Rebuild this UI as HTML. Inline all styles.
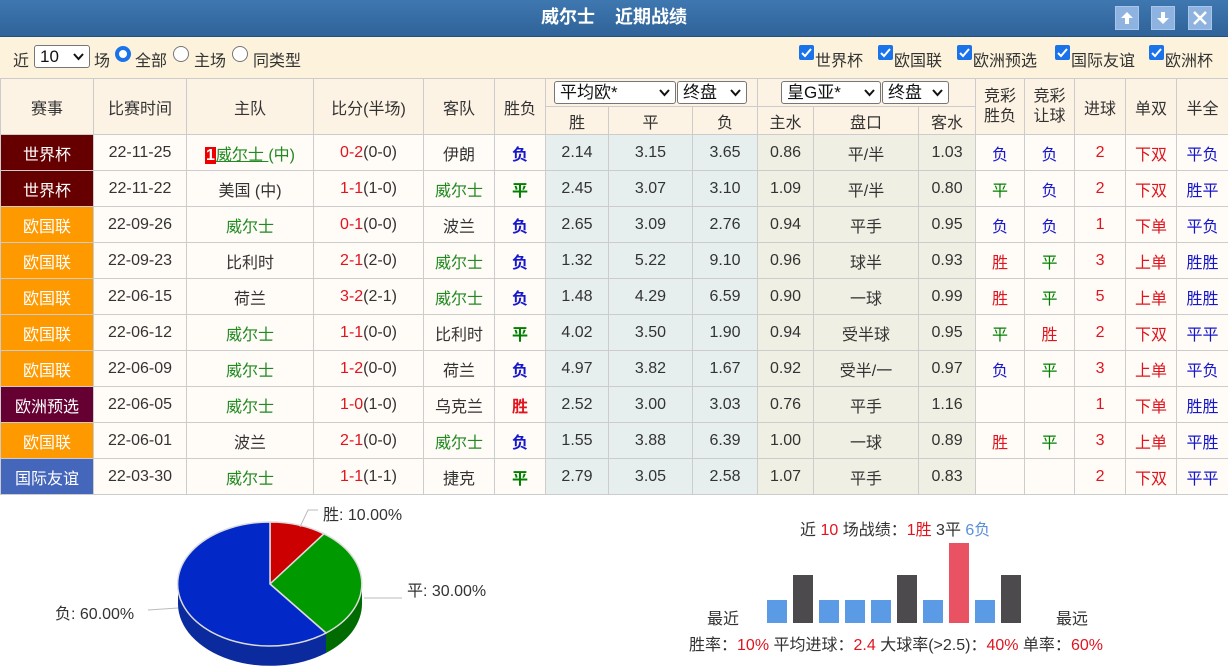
<!DOCTYPE html>
<html><head><meta charset="utf-8"><style>
*{margin:0;padding:0;box-sizing:border-box}
body{width:1228px;height:671px;overflow:hidden;background:#fff;font-family:"Liberation Sans","Noto Sans CJK SC",sans-serif;font-size:16px;color:#333;position:relative}
.title{position:absolute;left:0;top:0;width:1228px;height:37px;background:linear-gradient(#3f77b0,#2f6399);color:#fff;font-weight:bold;font-size:18px;text-align:center;line-height:35px;border-bottom:1px solid #24507e}
.btn{position:absolute;top:6px;width:24px;height:24px;background:#8fb3e0;border:1px solid #a9c6ea}
.filter{position:absolute;left:0;top:37px;width:1228px;height:41px;background:#fdf3dc}
.sel{position:absolute;background:#fff;border:1px solid #767676;border-radius:3px;height:23px;font-size:17px;line-height:21px;padding-left:5px;color:#111}
.sel svg{position:absolute;right:5px;top:7px}
.radio{position:absolute;width:16px;height:16px;border-radius:50%;border:1px solid #767676;background:#fff;top:46px}
.cb{position:absolute;top:45px;width:15px;height:15px;background:#1a73e8;border-radius:2px}
.cb svg{position:absolute;left:1px;top:1px}
table{position:absolute;left:0;top:78px;border-collapse:collapse;table-layout:fixed;width:1228px}
td{border:1px solid #ccc;text-align:center;white-space:nowrap;overflow:hidden;padding:0;vertical-align:middle}
thead td{background:#fdf3e4;height:28px;color:#333}
tbody td{height:36px;background:#fffbf7}
tbody td.o{background:#e6eeee}
tbody td.a{background:#efefe4}
.lg{color:#fff}
.g{color:#1f8a1f}.r{color:#e0141e}.b{color:#1616cc}.gg{color:#008000}
.bd{font-weight:bold}
.lab{position:absolute;font-size:16px;color:#333}
</style></head><body>
<div class="title">威尔士&nbsp;&nbsp;&nbsp;&nbsp;近期战绩</div>
<div class="btn" style="left:1115px"><svg width="22" height="22"><path d="M11 5 L5 11 H9 V17 H13 V11 H17 Z" fill="#fff"/></svg></div>
<div class="btn" style="left:1151px"><svg width="22" height="22"><path d="M11 17 L5 11 H9 V5 H13 V11 H17 Z" fill="#fff"/></svg></div>
<div class="btn" style="left:1188px"><svg width="22" height="22"><path d="M5 5 L17 17 M17 5 L5 17" stroke="#fff" stroke-width="2.5"/></svg></div>
<div class="filter"></div>
<span class="lab" style="left:13px;top:47px">近</span>
<div class="sel" style="left:34px;top:45px;width:56px;">10<svg width="11" height="8"><path d="M1 1 L5.5 6 L10 1" stroke="#111" stroke-width="2" fill="none"/></svg></div>
<span class="lab" style="left:94px;top:47px">场</span>
<div class="radio" style="left:115px;border:4px solid #1a73e8"></div>
<span class="lab" style="left:135px;top:47px">全部</span>
<div class="radio" style="left:173px"></div>
<span class="lab" style="left:194px;top:47px">主场</span>
<div class="radio" style="left:232px"></div>
<span class="lab" style="left:253px;top:47px">同类型</span>
<div class="cb" style="left:799px"><svg width="13" height="13"><path d="M2 7 L5 10 L11 3" stroke="#fff" stroke-width="2" fill="none"/></svg></div><span class="lab" style="left:815px;top:47px">世界杯</span>
<div class="cb" style="left:878px"><svg width="13" height="13"><path d="M2 7 L5 10 L11 3" stroke="#fff" stroke-width="2" fill="none"/></svg></div><span class="lab" style="left:894px;top:47px">欧国联</span>
<div class="cb" style="left:957px"><svg width="13" height="13"><path d="M2 7 L5 10 L11 3" stroke="#fff" stroke-width="2" fill="none"/></svg></div><span class="lab" style="left:973px;top:47px">欧洲预选</span>
<div class="cb" style="left:1055px"><svg width="13" height="13"><path d="M2 7 L5 10 L11 3" stroke="#fff" stroke-width="2" fill="none"/></svg></div><span class="lab" style="left:1071px;top:47px">国际友谊</span>
<div class="cb" style="left:1149px"><svg width="13" height="13"><path d="M2 7 L5 10 L11 3" stroke="#fff" stroke-width="2" fill="none"/></svg></div><span class="lab" style="left:1165px;top:47px">欧洲杯</span>
<table>
<colgroup><col style="width:93px"><col style="width:93px"><col style="width:127px"><col style="width:110px"><col style="width:71px"><col style="width:51px"><col style="width:63px"><col style="width:84px"><col style="width:65px"><col style="width:56px"><col style="width:105px"><col style="width:57px"><col style="width:49px"><col style="width:50px"><col style="width:51px"><col style="width:51px"><col style="width:52px"></colgroup>
<thead>
<tr><td rowspan="2">赛事</td><td rowspan="2">比赛时间</td><td rowspan="2">主队</td><td rowspan="2">比分(半场)</td><td rowspan="2">客队</td><td rowspan="2">胜负</td><td colspan="3"></td><td colspan="3"></td><td rowspan="2" style="line-height:20px">竞彩<br>胜负</td><td rowspan="2" style="line-height:20px">竞彩<br>让球</td><td rowspan="2">进球</td><td rowspan="2">单双</td><td rowspan="2">半全</td></tr>
<tr><td>胜</td><td>平</td><td>负</td><td>主水</td><td>盘口</td><td>客水</td></tr>
</thead>
<tbody>
<tr><td class="lg" style="background:#660000">世界杯</td><td>22-11-25</td><td class="g"><span style="background:#e00;color:#fff;font-weight:bold;padding:0 1px">1</span><u>威尔士 </u>(中)</td><td><span class="r">0-2</span>(0-0)</td><td>伊朗</td><td class="b bd">负</td><td class="o">2.14</td><td class="o">3.15</td><td class="o">3.65</td><td class="a">0.86</td><td class="a">平/半</td><td class="a">1.03</td><td class="b">负</td><td class="b">负</td><td class="r">2</td><td class="r">下双</td><td class="b">平负</td></tr>
<tr><td class="lg" style="background:#660000">世界杯</td><td>22-11-22</td><td>美国 (中)</td><td><span class="r">1-1</span>(1-0)</td><td class="g">威尔士</td><td class="gg bd">平</td><td class="o">2.45</td><td class="o">3.07</td><td class="o">3.10</td><td class="a">1.09</td><td class="a">平/半</td><td class="a">0.80</td><td class="gg">平</td><td class="b">负</td><td class="r">2</td><td class="r">下双</td><td class="b">胜平</td></tr>
<tr><td class="lg" style="background:#ff9900">欧国联</td><td>22-09-26</td><td class="g">威尔士</td><td><span class="r">0-1</span>(0-0)</td><td>波兰</td><td class="b bd">负</td><td class="o">2.65</td><td class="o">3.09</td><td class="o">2.76</td><td class="a">0.94</td><td class="a">平手</td><td class="a">0.95</td><td class="b">负</td><td class="b">负</td><td class="r">1</td><td class="r">下单</td><td class="b">平负</td></tr>
<tr><td class="lg" style="background:#ff9900">欧国联</td><td>22-09-23</td><td>比利时</td><td><span class="r">2-1</span>(2-0)</td><td class="g">威尔士</td><td class="b bd">负</td><td class="o">1.32</td><td class="o">5.22</td><td class="o">9.10</td><td class="a">0.96</td><td class="a">球半</td><td class="a">0.93</td><td class="r">胜</td><td class="gg">平</td><td class="r">3</td><td class="r">上单</td><td class="b">胜胜</td></tr>
<tr><td class="lg" style="background:#ff9900">欧国联</td><td>22-06-15</td><td>荷兰</td><td><span class="r">3-2</span>(2-1)</td><td class="g">威尔士</td><td class="b bd">负</td><td class="o">1.48</td><td class="o">4.29</td><td class="o">6.59</td><td class="a">0.90</td><td class="a">一球</td><td class="a">0.99</td><td class="r">胜</td><td class="gg">平</td><td class="r">5</td><td class="r">上单</td><td class="b">胜胜</td></tr>
<tr><td class="lg" style="background:#ff9900">欧国联</td><td>22-06-12</td><td class="g">威尔士</td><td><span class="r">1-1</span>(0-0)</td><td>比利时</td><td class="gg bd">平</td><td class="o">4.02</td><td class="o">3.50</td><td class="o">1.90</td><td class="a">0.94</td><td class="a">受半球</td><td class="a">0.95</td><td class="gg">平</td><td class="r">胜</td><td class="r">2</td><td class="r">下双</td><td class="b">平平</td></tr>
<tr><td class="lg" style="background:#ff9900">欧国联</td><td>22-06-09</td><td class="g">威尔士</td><td><span class="r">1-2</span>(0-0)</td><td>荷兰</td><td class="b bd">负</td><td class="o">4.97</td><td class="o">3.82</td><td class="o">1.67</td><td class="a">0.92</td><td class="a">受半/一</td><td class="a">0.97</td><td class="b">负</td><td class="gg">平</td><td class="r">3</td><td class="r">上单</td><td class="b">平负</td></tr>
<tr><td class="lg" style="background:#660033">欧洲预选</td><td>22-06-05</td><td class="g">威尔士</td><td><span class="r">1-0</span>(1-0)</td><td>乌克兰</td><td class="r bd">胜</td><td class="o">2.52</td><td class="o">3.00</td><td class="o">3.03</td><td class="a">0.76</td><td class="a">平手</td><td class="a">1.16</td><td></td><td></td><td class="r">1</td><td class="r">下单</td><td class="b">胜胜</td></tr>
<tr><td class="lg" style="background:#ff9900">欧国联</td><td>22-06-01</td><td>波兰</td><td><span class="r">2-1</span>(0-0)</td><td class="g">威尔士</td><td class="b bd">负</td><td class="o">1.55</td><td class="o">3.88</td><td class="o">6.39</td><td class="a">1.00</td><td class="a">一球</td><td class="a">0.89</td><td class="r">胜</td><td class="gg">平</td><td class="r">3</td><td class="r">上单</td><td class="b">平胜</td></tr>
<tr><td class="lg" style="background:#4466bb">国际友谊</td><td>22-03-30</td><td class="g">威尔士</td><td><span class="r">1-1</span>(1-1)</td><td>捷克</td><td class="gg bd">平</td><td class="o">2.79</td><td class="o">3.05</td><td class="o">2.58</td><td class="a">1.07</td><td class="a">平手</td><td class="a">0.83</td><td></td><td></td><td class="r">2</td><td class="r">下双</td><td class="b">平平</td></tr>
</tbody></table>
<div class="sel" style="left:554px;top:81px;width:122px">平均欧*<svg width="11" height="8"><path d="M1 1 L5.5 6 L10 1" stroke="#111" stroke-width="2" fill="none"/></svg></div>
<div class="sel" style="left:677px;top:81px;width:70px">终盘<svg width="11" height="8"><path d="M1 1 L5.5 6 L10 1" stroke="#111" stroke-width="2" fill="none"/></svg></div>
<div class="sel" style="left:781px;top:81px;width:100px">皇G亚*<svg width="11" height="8"><path d="M1 1 L5.5 6 L10 1" stroke="#111" stroke-width="2" fill="none"/></svg></div>
<div class="sel" style="left:882px;top:81px;width:67px">终盘<svg width="11" height="8"><path d="M1 1 L5.5 6 L10 1" stroke="#111" stroke-width="2" fill="none"/></svg></div>

<svg style="position:absolute;left:0;top:494px" width="600" height="177">
<g transform="translate(0,-494)">
<path d="M178 584 L178 604 A92 62 0 0 0 326 653 L326 633 A92 62 0 0 1 178 584Z" fill="#0a2a9e"/>
<path d="M326 633 L326 653 A92 62 0 0 0 362 604 L362 584 A92 62 0 0 1 326 633Z" fill="#006b00"/>
<path d="M270 584 L270 522 A92 62 0 0 1 324 533.8 Z" fill="#cc0000" stroke="#ddd" stroke-width="1.5"/>
<path d="M270 584 L324 533.8 A92 62 0 0 1 326 633 Z" fill="#009900" stroke="#ddd" stroke-width="1.5"/>
<path d="M270 584 L326 633 A92 62 0 1 1 270 522 Z" fill="#0328c8" stroke="#ddd" stroke-width="1.5"/>
<path d="M300 527 L308 510 L318 510" stroke="#bbb" fill="none"/>
<path d="M364 598 L402 598" stroke="#bbb" fill="none"/>
<path d="M148 610 L178 608" stroke="#bbb" fill="none"/>
</g></svg>
<span class="lab" style="left:323px;top:501px">胜: 10.00%</span>
<span class="lab" style="left:407px;top:577px">平: 30.00%</span>
<span class="lab" style="left:55px;top:600px">负: 60.00%</span>

<span class="lab" style="left:800px;top:516px">近 <span class="r">10</span> 场战绩：<span class="r">1胜</span> 3平 <span style="color:#5b8fd8">6负</span></span>
<div style="position:absolute;left:767px;top:600px;width:20px;height:23px;background:#5b9be6"></div>
<div style="position:absolute;left:793px;top:575px;width:20px;height:48px;background:#4d4a4d"></div>
<div style="position:absolute;left:819px;top:600px;width:20px;height:23px;background:#5b9be6"></div>
<div style="position:absolute;left:845px;top:600px;width:20px;height:23px;background:#5b9be6"></div>
<div style="position:absolute;left:871px;top:600px;width:20px;height:23px;background:#5b9be6"></div>
<div style="position:absolute;left:897px;top:575px;width:20px;height:48px;background:#4d4a4d"></div>
<div style="position:absolute;left:923px;top:600px;width:20px;height:23px;background:#5b9be6"></div>
<div style="position:absolute;left:949px;top:543px;width:20px;height:80px;background:#e85263"></div>
<div style="position:absolute;left:975px;top:600px;width:20px;height:23px;background:#5b9be6"></div>
<div style="position:absolute;left:1001px;top:575px;width:20px;height:48px;background:#4d4a4d"></div>
<span class="lab" style="left:707px;top:605px">最近</span>
<span class="lab" style="left:1056px;top:605px">最远</span>
<span class="lab" style="left:689px;top:631px">胜率：<span class="r">10%</span> 平均进球：<span class="r">2.4</span> 大球率(&gt;2.5)：<span class="r">40%</span> 单率：<span class="r">60%</span></span>
</body></html>
